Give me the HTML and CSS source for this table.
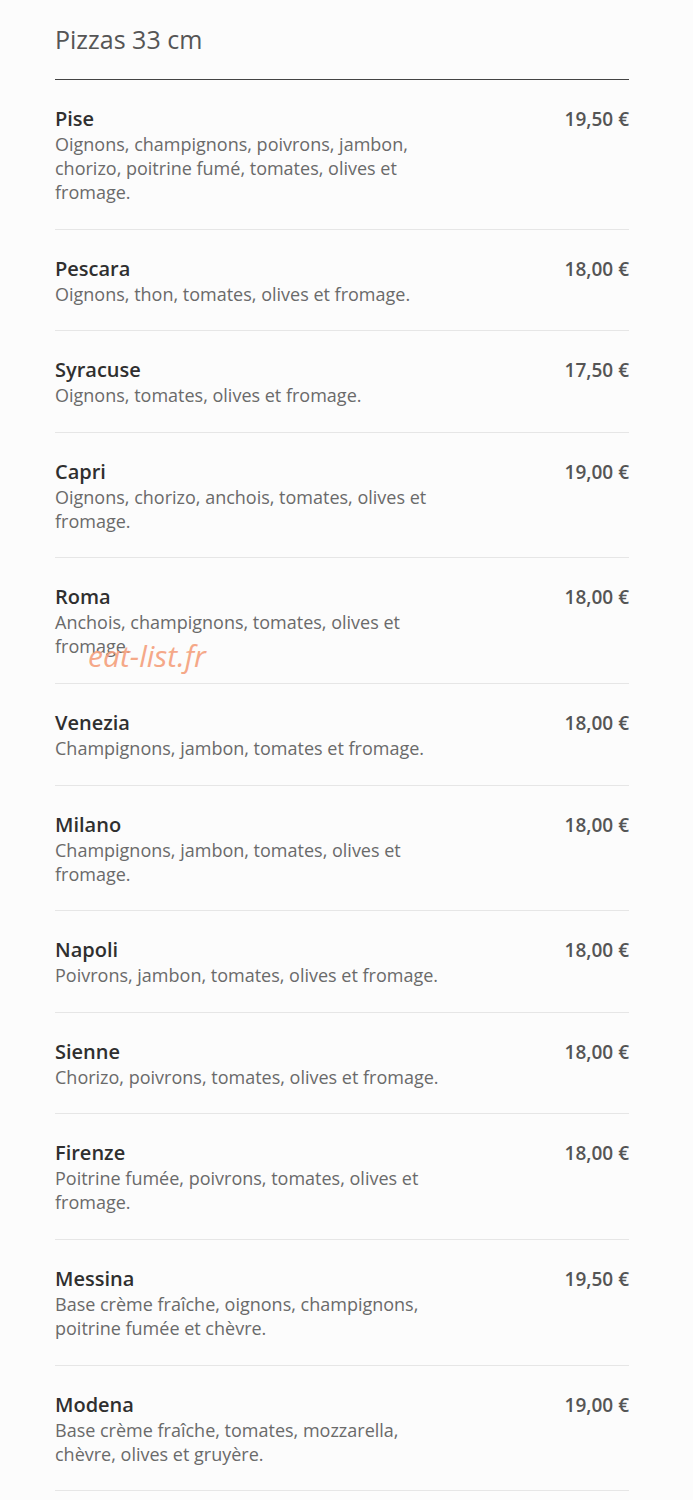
FILE: index.html
```html
<!DOCTYPE html>
<html lang="fr">
<head>
  <meta charset="UTF-8">
  <meta name="viewport" content="width=device-width, initial-scale=1.0">
  <title>Pizzas 33 cm</title>
  <link rel="stylesheet" href="styles.css">
</head>
<body>

  <div class="menu">
    <h2 class="menu-title">Pizzas 33 cm</h2>

    <div class="item">
      <div class="item-text">
        <div class="item-name">Pise</div>
        <div class="item-desc">Oignons, champignons, poivrons, jambon, chorizo, poitrine fumé, tomates, olives et fromage.</div>
      </div>
      <div class="item-price">19,50 €</div>
    </div>

    <div class="item">
      <div class="item-text">
        <div class="item-name">Pescara</div>
        <div class="item-desc">Oignons, thon, tomates, olives et fromage.</div>
      </div>
      <div class="item-price">18,00 €</div>
    </div>

    <div class="item">
      <div class="item-text">
        <div class="item-name">Syracuse</div>
        <div class="item-desc">Oignons, tomates, olives et fromage.</div>
      </div>
      <div class="item-price">17,50 €</div>
    </div>

    <div class="item">
      <div class="item-text">
        <div class="item-name">Capri</div>
        <div class="item-desc">Oignons, chorizo, anchois, tomates, olives et fromage.</div>
      </div>
      <div class="item-price">19,00 €</div>
    </div>

    <div class="item">
      <div class="item-text">
        <div class="item-name">Roma</div>
        <div class="item-desc">Anchois, champignons, tomates, olives et fromage.</div>
        <span class="watermark">eat-list.fr</span>
      </div>
      <div class="item-price">18,00 €</div>
    </div>

    <div class="item">
      <div class="item-text">
        <div class="item-name">Venezia</div>
        <div class="item-desc">Champignons, jambon, tomates et fromage.</div>
      </div>
      <div class="item-price">18,00 €</div>
    </div>

    <div class="item">
      <div class="item-text">
        <div class="item-name">Milano</div>
        <div class="item-desc">Champignons, jambon, tomates, olives et fromage.</div>
      </div>
      <div class="item-price">18,00 €</div>
    </div>

    <div class="item">
      <div class="item-text">
        <div class="item-name">Napoli</div>
        <div class="item-desc">Poivrons, jambon, tomates, olives et fromage.</div>
      </div>
      <div class="item-price">18,00 €</div>
    </div>

    <div class="item">
      <div class="item-text">
        <div class="item-name">Sienne</div>
        <div class="item-desc">Chorizo, poivrons, tomates, olives et fromage.</div>
      </div>
      <div class="item-price">18,00 €</div>
    </div>

    <div class="item">
      <div class="item-text">
        <div class="item-name">Firenze</div>
        <div class="item-desc">Poitrine fumée, poivrons, tomates, olives et fromage.</div>
      </div>
      <div class="item-price">18,00 €</div>
    </div>

    <div class="item">
      <div class="item-text">
        <div class="item-name">Messina</div>
        <div class="item-desc">Base crème fraîche, oignons, champignons, poitrine fumée et chèvre.</div>
      </div>
      <div class="item-price">19,50 €</div>
    </div>

    <div class="item">
      <div class="item-text">
        <div class="item-name">Modena</div>
        <div class="item-desc">Base crème fraîche, tomates, mozzarella, chèvre, olives et gruyère.</div>
      </div>
      <div class="item-price">19,00 €</div>
    </div>
  </div>

</body>
</html>
```

FILE: styles.css
```css
body {
  font-family: "Open Sans", Arial, sans-serif;
  margin: 0;
  padding: 0;
  background-color: #fcfcfc;
  color: #333;
}
.menu {
  width: 574px;
  margin: 0 0 0 55px;
  padding-top: 22px;
}
.menu-title {
  font-size: 25px;
  font-weight: 400;
  color: #555;
  margin: 0;
  line-height: 34px;
  padding-bottom: 23px;
  border-bottom: 1px solid #444;
}
.item {
  display: flex;
  justify-content: space-between;
  align-items: flex-start;
  padding: 26px 0 24.6px;
  border-bottom: 1px solid #e6e6e6;
}
.item-text {
  position: relative;
  max-width: 398px;
}
.item-name {
  font-size: 20px;
  font-weight: 600;
  line-height: 26px;
  color: #2f2f2f;
}
.item-desc {
  font-size: 18px;
  line-height: 24px;
  color: #6a6a6a;
}
.item-price {
  font-size: 19px;
  font-weight: 600;
  line-height: 26px;
  color: #555;
}
.watermark {
  position: absolute;
  left: 33px;
  top: 54px;
  font-size: 30px;
  line-height: 36px;
  font-style: italic;
  color: #f5a07c;
  opacity: 0.9;
  white-space: nowrap;
}
```
